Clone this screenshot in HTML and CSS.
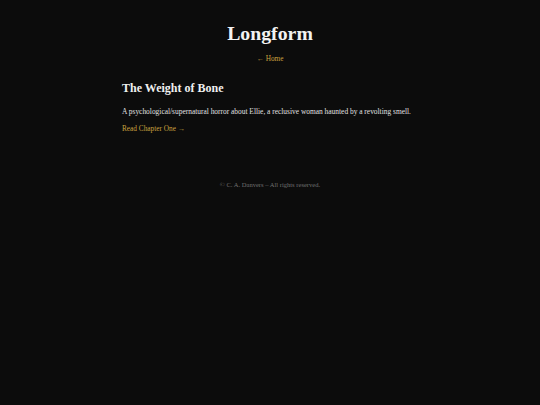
FILE: index.html
```html
<!DOCTYPE html>
<html>
<head>
<meta charset="utf-8">
<link rel="stylesheet" href="styles.css">
</head>
<body>
<header class="site-header">
  <h1 class="site-title">Longform</h1>
  <a class="back-link" href="#">← Home</a>
</header>
<main class="content">
  <article class="story">
    <h2 class="story-title">The Weight of Bone</h2>
    <p class="story-summary">A psychological/supernatural horror about Ellie, a reclusive woman haunted by a revolting smell.</p>
    <a class="read-link" href="#">Read Chapter One →</a>
  </article>
</main>
<footer class="site-footer">© C. A. Danvers – All rights reserved.</footer>
</body>
</html>
```
FILE: styles.css
```css
html, body {
  margin: 0;
  padding: 0;
  background: #0c0c0c;
}
body {
  width: 540px;
  height: 405px;
  font-family: "Liberation Serif", Georgia, serif;
  color: #e0e0e0;
  font-size: 7.43px;
}
.site-header {
  display: flex;
  flex-direction: column;
  align-items: center;
  padding-top: 22px;
}
.site-title {
  margin: 0;
  font-size: 19.8px;
  font-weight: bold;
  color: #f2f2f2;
  line-height: 22px;
}
.back-link {
  margin-top: 10px;
  color: #c9a13f;
  text-decoration: none;
  font-size: 7.3px;
  line-height: 10px;
}
.content {
  width: 296px;
  margin: 0 auto;
  padding-top: 16px;
}
.story-title {
  margin: 0;
  font-size: 12px;
  font-weight: bold;
  color: #f0f0f0;
  line-height: 16px;
}
.story-summary {
  margin: 11px 0 0;
  line-height: 10px;
}
.read-link {
  display: block;
  margin-top: 7px;
  color: #c9a13f;
  text-decoration: none;
  font-size: 7.3px;
  line-height: 10px;
}
.site-footer {
  text-align: center;
  margin-top: 46px;
  color: #707070;
  font-size: 6.55px;
  line-height: 10px;
}
```
